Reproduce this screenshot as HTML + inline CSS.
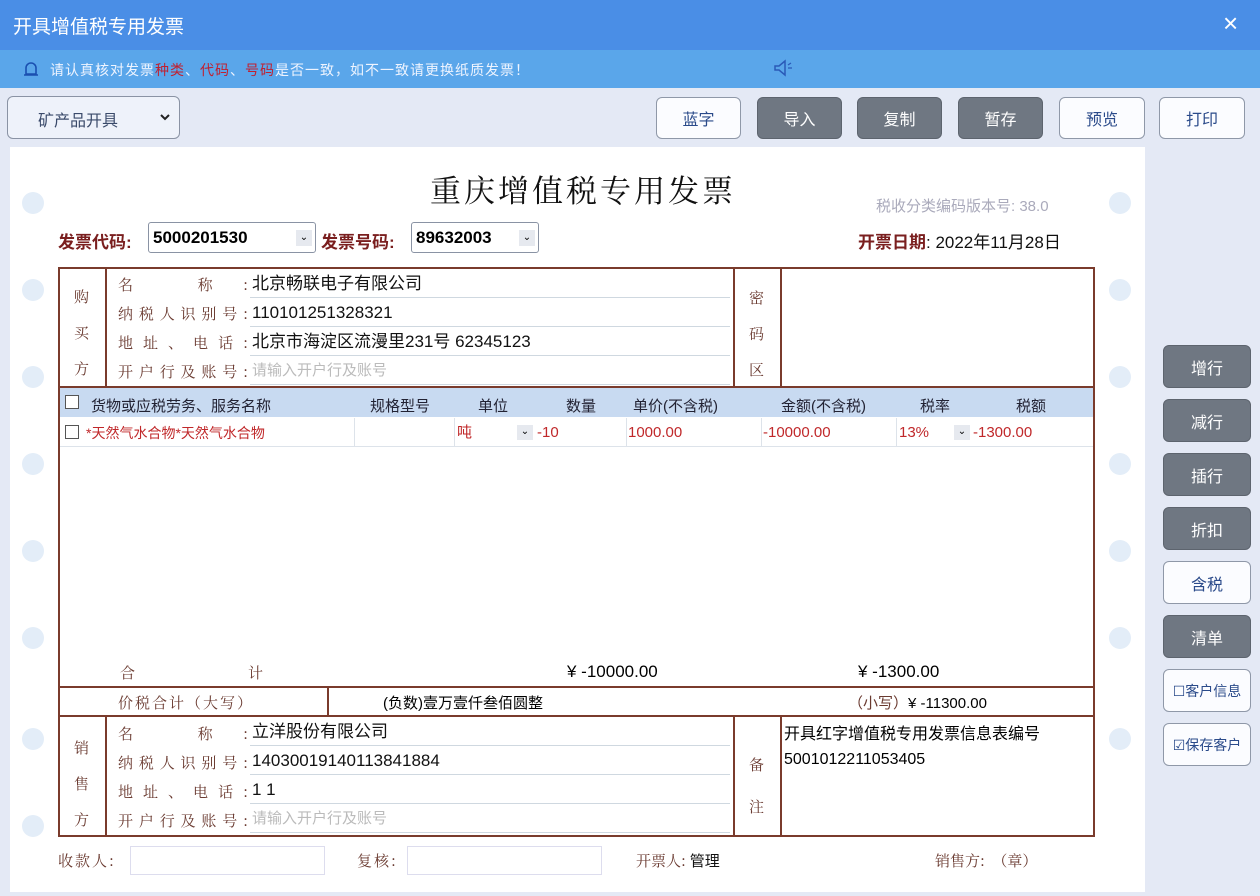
<!DOCTYPE html>
<html><head><meta charset="utf-8"><style>
*{margin:0;padding:0;box-sizing:border-box}
body{width:1260px;height:896px;overflow:hidden;background:#e4e9f5;font-family:"Liberation Sans","Noto Sans CJK SC",sans-serif;position:relative}
.a{position:absolute}
.btn{position:absolute;height:42px;border-radius:6px;font-size:16px;display:flex;align-items:center;justify-content:center}
.w{background:#fbfcff;border:1px solid #8f98a8;color:#2a4a8a}
.d{background:#6f7782;border:1px solid #5d646e;color:#fff}
.lab{position:absolute;font-family:"Noto Serif CJK SC",serif;color:#6a3a30;font-size:15px}
.jl{position:absolute;left:118px;width:130px;height:29px;line-height:29px;font-family:"Noto Serif CJK SC",serif;color:#6a3a30;font-size:15px;text-align:justify;text-align-last:justify}
.inp{position:absolute;background:#fff;border-bottom:1px solid #cfd8e0;height:28px;font-size:17px;color:#111;padding-left:2px;line-height:28px}
.hole{position:absolute;width:22px;height:22px;border-radius:50%;background:#e3edf8}
.th{position:absolute;top:395px;font-size:15px;color:#223}
.cell{position:absolute;top:420px;height:26px;line-height:26px;font-size:15px;color:#c0282a}
</style></head><body>
<div class="a" style="left:0;top:0;width:1260px;height:50px;background:#4a8ee6"></div>
<div class="a" style="left:13px;top:12px;color:#fff;font-size:19px">开具增值税专用发票</div>
<div class="a" style="left:1223px;top:8px;color:#fff;font-size:26px">×</div>
<div class="a" style="left:0;top:50px;width:1260px;height:38px;background:#5aa6ea"></div>
<svg class="a" style="left:22px;top:60px" width="18" height="20"><path d="M4 14 V8 a5 5 0 0 1 10 0 V14 Z M2 15 H16" stroke="#1a4fb0" stroke-width="1.6" fill="none"/></svg>
<div class="a" style="left:50px;top:60px;font-size:14px;color:#eef4ff;letter-spacing:1px">请认真核对发票<span style="color:#c02030">种类</span>、<span style="color:#c02030">代码</span>、<span style="color:#c02030">号码</span>是否一致，如不一致请更换纸质发票！</div>
<svg class="a" style="left:772px;top:58px" width="24" height="20"><path d="M3 8 H7 L13 3 V17 L7 12 H3 Z" stroke="#2a5ab8" stroke-width="1.5" fill="none"/><path d="M16 7 L19 5 M16 10 H20" stroke="#2a5ab8" stroke-width="1.3"/></svg>

<div class="a" style="left:7px;top:96px;width:173px;height:43px;background:#eef2fa;border:1px solid #8a93a4;border-radius:6px"></div>
<div class="a" style="left:38px;top:107px;font-size:16px;color:#3a4a6a">矿产品开具</div>
<svg class="a" style="left:160px;top:114px" width="10" height="8"><path d="M1 1 L5 5 L9 1" stroke="#222" stroke-width="2" fill="none"/></svg>

<div class="btn w" style="left:656px;top:97px;width:85px">蓝字</div>
<div class="btn d" style="left:757px;top:97px;width:85px">导入</div>
<div class="btn d" style="left:857px;top:97px;width:85px">复制</div>
<div class="btn d" style="left:958px;top:97px;width:85px">暂存</div>
<div class="btn w" style="left:1059px;top:97px;width:86px">预览</div>
<div class="btn w" style="left:1159px;top:97px;width:86px">打印</div>

<div class="a" style="left:10px;top:147px;width:1135px;height:745px;background:#fff"></div>
<div class="hole" style="left:22px;top:192px"></div><div class="hole" style="left:22px;top:279px"></div><div class="hole" style="left:22px;top:366px"></div><div class="hole" style="left:22px;top:453px"></div><div class="hole" style="left:22px;top:540px"></div><div class="hole" style="left:22px;top:627px"></div><div class="hole" style="left:22px;top:728px"></div><div class="hole" style="left:22px;top:815px"></div>
<div class="hole" style="left:1109px;top:192px"></div><div class="hole" style="left:1109px;top:279px"></div><div class="hole" style="left:1109px;top:366px"></div><div class="hole" style="left:1109px;top:453px"></div><div class="hole" style="left:1109px;top:540px"></div><div class="hole" style="left:1109px;top:627px"></div><div class="hole" style="left:1109px;top:728px"></div>

<div class="a" style="left:430px;top:166px;font-family:'Noto Serif CJK SC',serif;font-size:31px;color:#111;letter-spacing:3px">重庆增值税专用发票</div>
<div class="a" style="left:876px;top:195px;font-size:15px;color:#aab">税收分类编码版本号: 38.0</div>
<div class="a" style="left:58px;top:228px;font-size:17px;font-weight:bold;color:#7a1f1f">发票代码:</div>
<div class="a" style="left:148px;top:222px;width:168px;height:31px;border:1px solid #8a93a4;border-radius:3px;font-size:17px;font-weight:bold;padding:5px 4px">5000201530</div>
<div class="a" style="left:296px;top:230px;width:16px;height:16px;background:#e6e9ef;font-size:10px;text-align:center;line-height:16px">⌄</div>
<div class="a" style="left:321px;top:228px;font-size:17px;font-weight:bold;color:#7a1f1f">发票号码:</div>
<div class="a" style="left:411px;top:222px;width:128px;height:31px;border:1px solid #8a93a4;border-radius:3px;font-size:17px;font-weight:bold;padding:5px 4px">89632003</div>
<div class="a" style="left:519px;top:230px;width:16px;height:16px;background:#e6e9ef;font-size:10px;text-align:center;line-height:16px">⌄</div>
<div class="a" style="left:858px;top:228px;font-size:17px;color:#111"><b style="color:#7a1f1f">开票日期</b>: 2022年11月28日</div>

<div class="a" style="left:58px;top:267px;width:1037px;height:570px;border:2px solid #7a3b2c"></div>
<div class="a" style="left:58px;top:386px;width:1037px;height:2px;background:#7a3b2c"></div>
<div class="a" style="left:58px;top:686px;width:1037px;height:2px;background:#7a3b2c"></div>
<div class="a" style="left:58px;top:715px;width:1037px;height:2px;background:#7a3b2c"></div>
<div class="a" style="left:105px;top:267px;width:2px;height:120px;background:#7a3b2c"></div>
<div class="a" style="left:733px;top:267px;width:2px;height:120px;background:#7a3b2c"></div>
<div class="a" style="left:780px;top:267px;width:2px;height:120px;background:#7a3b2c"></div>
<div class="a" style="left:105px;top:716px;width:2px;height:120px;background:#7a3b2c"></div>
<div class="a" style="left:733px;top:716px;width:2px;height:120px;background:#7a3b2c"></div>
<div class="a" style="left:780px;top:716px;width:2px;height:120px;background:#7a3b2c"></div>
<div class="a" style="left:327px;top:687px;width:2px;height:29px;background:#7a3b2c"></div>

<div class="lab" style="left:74px;top:279px;line-height:36px;width:20px">购<br>买<br>方</div>
<div class="jl" style="top:270px">名 称:</div>
<div class="jl" style="top:299px">纳税人识别号:</div>
<div class="jl" style="top:328px">地址、电话:</div>
<div class="jl" style="top:357px">开户行及账号:</div>
<div class="inp" style="left:250px;top:270px;width:480px">北京畅联电子有限公司</div>
<div class="inp" style="left:250px;top:299px;width:480px">110101251328321</div>
<div class="inp" style="left:250px;top:328px;width:480px">北京市海淀区流漫里231号 62345123</div>
<div class="inp" style="left:250px;top:357px;width:480px;color:#bbb;font-size:15px">请输入开户行及账号</div>
<div class="lab" style="left:749px;top:280px;line-height:36px">密<br>码<br>区</div>

<div class="a" style="left:60px;top:388px;width:1033px;height:29px;background:#c8daf1"></div>
<div class="a" style="left:65px;top:395px;width:14px;height:14px;border:1px solid #555;background:#fff"></div>
<div class="th" style="left:91px">货物或应税劳务、服务名称</div>
<div class="th" style="left:370px">规格型号</div>
<div class="th" style="left:478px">单位</div>
<div class="th" style="left:566px">数量</div>
<div class="th" style="left:633px">单价(不含税)</div>
<div class="th" style="left:781px">金额(不含税)</div>
<div class="th" style="left:920px">税率</div>
<div class="th" style="left:1016px">税额</div>
<div class="a" style="left:60px;top:446px;width:1033px;height:1px;background:#dde3ea"></div>
<div class="a" style="left:65px;top:425px;width:14px;height:14px;border:1px solid #555;background:#fff"></div>
<div class="cell" style="left:86px;font-size:14px">*天然气水合物*天然气水合物</div>
<div class="a" style="left:354px;top:418px;width:1px;height:28px;background:#dde3ea"></div>
<div class="a" style="left:454px;top:418px;width:1px;height:28px;background:#dde3ea"></div>
<div class="cell" style="left:457px">吨</div>
<div class="a" style="left:517px;top:425px;width:16px;height:15px;background:#e6e9ef;font-size:10px;text-align:center;line-height:14px">⌄</div>
<div class="cell" style="left:537px">-10</div>
<div class="a" style="left:626px;top:418px;width:1px;height:28px;background:#dde3ea"></div>
<div class="cell" style="left:628px">1000.00</div>
<div class="a" style="left:761px;top:418px;width:1px;height:28px;background:#dde3ea"></div>
<div class="cell" style="left:763px">-10000.00</div>
<div class="a" style="left:896px;top:418px;width:1px;height:28px;background:#dde3ea"></div>
<div class="cell" style="left:899px">13%</div>
<div class="a" style="left:954px;top:425px;width:16px;height:15px;background:#e6e9ef;font-size:10px;text-align:center;line-height:14px">⌄</div>
<div class="cell" style="left:973px">-1300.00</div>

<div class="lab" style="left:120px;top:662px">合</div>
<div class="lab" style="left:248px;top:662px">计</div>
<div class="a" style="left:567px;top:662px;font-size:17px">¥ -10000.00</div>
<div class="a" style="left:858px;top:662px;font-size:17px">¥ -1300.00</div>
<div class="lab" style="left:118px;top:692px;letter-spacing:2px">价税合计（大写）</div>
<div class="a" style="left:383px;top:692px;font-size:15px">(负数)壹万壹仟叁佰圆整</div>
<div class="a" style="left:848px;top:692px;font-size:15px"><span style="color:#6a3a30">（小写）</span>¥ -11300.00</div>

<div class="lab" style="left:74px;top:730px;line-height:36px;width:20px">销<br>售<br>方</div>
<div class="jl" style="top:719px">名 称:</div>
<div class="jl" style="top:748px">纳税人识别号:</div>
<div class="jl" style="top:777px">地址、电话:</div>
<div class="jl" style="top:806px">开户行及账号:</div>
<div class="inp" style="left:250px;top:718px;width:480px">立洋股份有限公司</div>
<div class="inp" style="left:250px;top:747px;width:480px">14030019140113841884</div>
<div class="inp" style="left:250px;top:776px;width:480px">1 1</div>
<div class="inp" style="left:250px;top:805px;width:480px;color:#bbb;font-size:15px">请输入开户行及账号</div>
<div class="lab" style="left:749px;top:744px;line-height:42px">备<br>注</div>
<div class="a" style="left:784px;top:722px;font-size:16px;line-height:25px">开具红字增值税专用发票信息表编号<br>5001012211053405</div>

<div class="lab" style="left:58px;top:850px;letter-spacing:2px">收款人:</div>
<div class="a" style="left:130px;top:846px;width:195px;height:29px;border:1px solid #dde"></div>
<div class="lab" style="left:357px;top:850px;letter-spacing:2px">复核:</div>
<div class="a" style="left:407px;top:846px;width:195px;height:29px;border:1px solid #dde"></div>
<div class="lab" style="left:636px;top:850px">开票人: <span style="font-family:'Liberation Sans','Noto Sans CJK SC',sans-serif;color:#111">管理</span></div>
<div class="lab" style="left:935px;top:850px">销售方:　（章）</div>

<div class="btn d" style="left:1163px;top:345px;width:88px;height:43px">增行</div>
<div class="btn d" style="left:1163px;top:399px;width:88px;height:43px">减行</div>
<div class="btn d" style="left:1163px;top:453px;width:88px;height:43px">插行</div>
<div class="btn d" style="left:1163px;top:507px;width:88px;height:43px">折扣</div>
<div class="btn w" style="left:1163px;top:561px;width:88px;height:43px">含税</div>
<div class="btn d" style="left:1163px;top:615px;width:88px;height:43px">清单</div>
<div class="btn w" style="left:1163px;top:669px;width:88px;height:43px;font-size:14px">☐客户信息</div>
<div class="btn w" style="left:1163px;top:723px;width:88px;height:43px;font-size:14px">☑保存客户</div>
</body></html>
